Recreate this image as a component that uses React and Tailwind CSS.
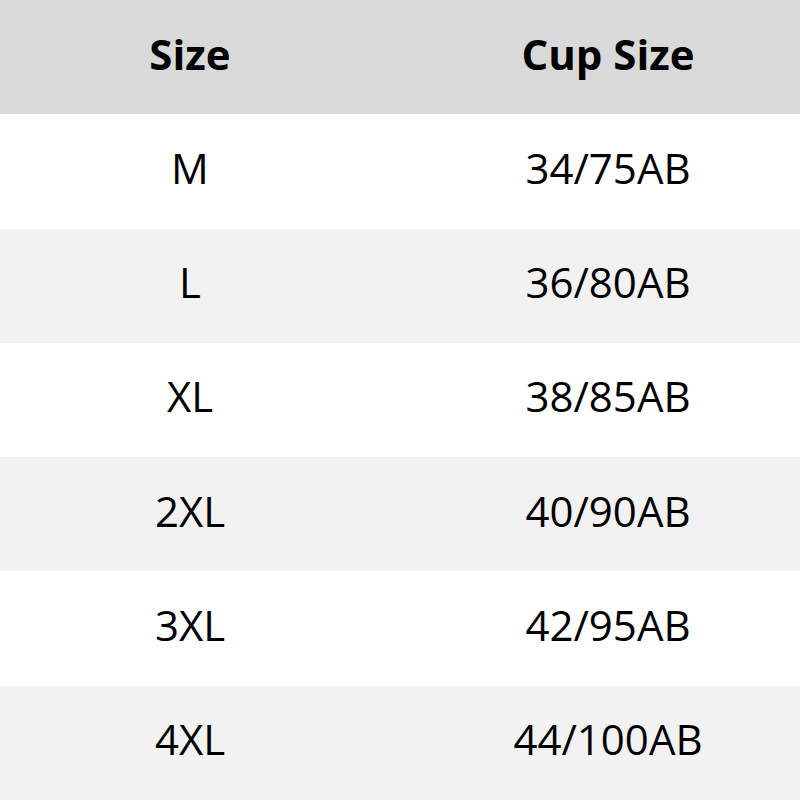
import React from "react";

const rows = [
  ["M", "34/75AB"],
  ["L", "36/80AB"],
  ["XL", "38/85AB"],
  ["2XL", "40/90AB"],
  ["3XL", "42/95AB"],
  ["4XL", "44/100AB"],
];

const App = () => {
  return (
    <div
      className="w-[800px] h-[800px] grid grid-rows-7 text-black text-[42px]"
      style={{ fontFamily: '"Open Sans", "Noto Sans", sans-serif' }}
    >
      <div className="flex items-center pb-2 bg-[#d9d9d9] font-bold">
        <div className="w-[380px] text-center">Size</div>
        <div className="flex-1 pl-[36px] text-center">Cup Size</div>
      </div>
      {rows.map(([size, cup], i) => (
        <div
          key={size}
          className={`flex items-center pb-2 ${i % 2 === 0 ? "bg-white" : "bg-[#f2f2f2]"}`}
        >
          <div className="w-[380px] text-center">{size}</div>
          <div className="flex-1 pl-[36px] text-center">{cup}</div>
        </div>
      ))}
    </div>
  );
};

export default App;
